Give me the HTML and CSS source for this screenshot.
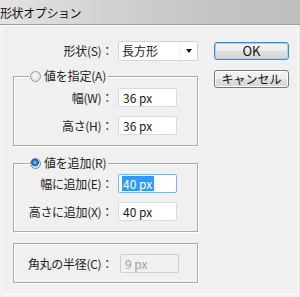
FILE: index.html
```html
<!DOCTYPE html>
<html lang="ja">
<head>
<meta charset="utf-8">
<title>形状オプション</title>
<link rel="stylesheet" href="styles.css">
</head>
<body>
<div class="window">
  <div class="titlebar"><span class="title">形状オプション</span></div>
  <div class="content">
    <div class="main">
      <div class="row top-row">
        <span class="label">形状(S)：</span>
        <div class="select"><span class="select-text">長方形</span><span class="arrow"></span></div>
      </div>

      <fieldset class="group">
        <legend class="legend"><span class="radio"></span><span>値を指定(A)</span></legend>
        <div class="row">
          <span class="label">幅(W)：</span>
          <div class="field">36 px</div>
        </div>
        <div class="row">
          <span class="label">高さ(H)：</span>
          <div class="field">36 px</div>
        </div>
      </fieldset>

      <fieldset class="group group-2">
        <legend class="legend"><span class="radio checked"></span><span>値を追加(R)</span></legend>
        <div class="row">
          <span class="label">幅に追加(E)：</span>
          <div class="field focused"><span class="sel">40 px</span></div>
        </div>
        <div class="row">
          <span class="label">高さに追加(X)：</span>
          <div class="field">40 px</div>
        </div>
      </fieldset>

      <div class="group plain">
        <div class="row">
          <span class="label">角丸の半径(C)：</span>
          <div class="field disabled">9 px</div>
        </div>
      </div>
    </div>

    <div class="buttons">
      <div class="button default">OK</div>
      <div class="button">キャンセル</div>
    </div>
  </div>
</div>
</body>
</html>
```

FILE: styles.css
```css
html, body {
  margin: 0;
  padding: 0;
}

body {
  background: #f0f0f0;
  font-family: "Noto Sans CJK JP", "Noto Sans", sans-serif;
  font-size: 12px;
  color: #1e1e1e;
  width: 300px;
  height: 297px;
  overflow: hidden;
}

.window {
  width: 300px;
  height: 297px;
  display: flex;
  flex-direction: column;
}

.titlebar {
  height: 24px;
  flex: none;
  background: linear-gradient(to right, #e3e3e3 0%, #d2d2d2 35%, #c4c4c4 70%, #bebebe 100%);
  border-bottom: 1px solid #9c9c9c;
  box-shadow: 0 1px 0 #fbfbfb;
  display: flex;
  align-items: center;
  overflow: hidden;
}

.title {
  font-size: 12px;
  line-height: 14px;
  margin-left: 0;
  letter-spacing: -0.4px;
  color: #111;
  padding-top: 1px;
}

.content {
  flex: 1;
  display: flex;
  align-items: flex-start;
  margin: 1px 2px 2px 1px;
  border: 1px solid #fafafa;
  border-top: none;
  padding: 15px 0 0 11px;
}

.main {
  width: 185px;
  display: flex;
  flex-direction: column;
}

.row {
  display: flex;
  align-items: center;
  height: 19px;
}

.top-row {
  height: 20px;
}

.label {
  width: 99px;
  flex: none;
  text-align: right;
  margin-right: 5px;
  line-height: 14px;
  white-space: nowrap;
  letter-spacing: -0.3px;
}

.top-row .label {
  width: 100px;
}

.select {
  width: 80px;
  height: 20px;
  box-sizing: border-box;
  background: #fff;
  border: 1px solid #d4d4d4;
  border-radius: 2px;
  display: flex;
  align-items: center;
}

.select-text {
  padding-left: 3px;
  flex: 1;
  line-height: 14px;
  border-right: 1px solid #f2f2f2;
  height: 18px;
  display: flex;
  align-items: center;
}

.arrow {
  width: 17px;
  height: 18px;
  display: flex;
  align-items: center;
  justify-content: center;
}

.arrow::before {
  content: "";
  border-left: 3.5px solid transparent;
  border-right: 3.5px solid transparent;
  border-top: 4px solid #111;
  margin-left: 1px;
}

.group {
  margin: 9px 0 0 0;
  padding: 6px 0 10px 0;
  border: 1px solid #a9a9a9;
  box-shadow: inset 1px 1px 0 #fdfdfd, 1px 1px 0 #fdfdfd;
  min-width: 0;
  width: 185px;
  box-sizing: border-box;
  display: flex;
  flex-direction: column;
  gap: 9px;
}

.group-2 {
  margin-top: 11px;
  padding-top: 5px;
}

.plain {
  margin-top: 11px;
  padding: 10px 0 9px 0;
}

.plain .field {
  margin-left: 2px;
}

.legend {
  margin-left: 15px;
  padding: 0 2px 0 1px;
  height: 12px;
  line-height: 12px;
  display: flex;
  align-items: center;
  gap: 3px;
  letter-spacing: -0.2px;
}

.radio {
  width: 11px;
  height: 11px;
  box-sizing: border-box;
  border-radius: 50%;
  border: 1px solid #9a9a9a;
  background: radial-gradient(circle at 50% 40%, #fbfbfb 0%, #e6e6e6 55%, #cfcfcf 100%);
  flex: none;
}

.radio.checked {
  border-color: #7a8a9a;
  background:
    radial-gradient(circle at 45% 40%, #8fd0ff 0px, #2f86d8 2px, #0d4f96 3.5px, rgba(0,0,0,0) 4px),
    radial-gradient(circle at 50% 40%, #fbfbfb 0%, #e6e6e6 55%, #cfcfcf 100%);
}

.field {
  width: 59px;
  height: 19px;
  box-sizing: border-box;
  background: #fff;
  border: 1px solid #dadada;
  border-radius: 2px;
  padding-left: 4px;
  display: flex;
  align-items: center;
  line-height: 14px;
  color: #1a1a1a;
  white-space: nowrap;
}

.field.focused {
  border-color: #7fb4e8;
  padding-left: 3px;
}

.sel {
  background: #3399ff;
  color: #fff;
  padding: 1px 2px 1px 1px;
  line-height: 13px;
}

.field.disabled {
  background: #f0f0f0;
  border-color: #cfcfcf;
  color: #a2a2a2;
}

.buttons {
  margin-left: 16px;
  padding-top: 1px;
  width: 75px;
  display: flex;
  flex-direction: column;
  gap: 10px;
}

.button {
  height: 18px;
  box-sizing: border-box;
  border: 1px solid #777;
  border-radius: 3px;
  background: linear-gradient(to bottom, #f4f4f4 0%, #ececec 48%, #dedede 52%, #d6d6d6 100%);
  display: flex;
  align-items: center;
  justify-content: center;
  line-height: 14px;
  color: #111;
  box-shadow: inset 0 0 0 1px #fbfbfb;
}

.button.default {
  border-color: #3c8ad0;
  box-shadow: inset 0 0 0 1px #9fd3f7;
  font-size: 13px;
}
```
